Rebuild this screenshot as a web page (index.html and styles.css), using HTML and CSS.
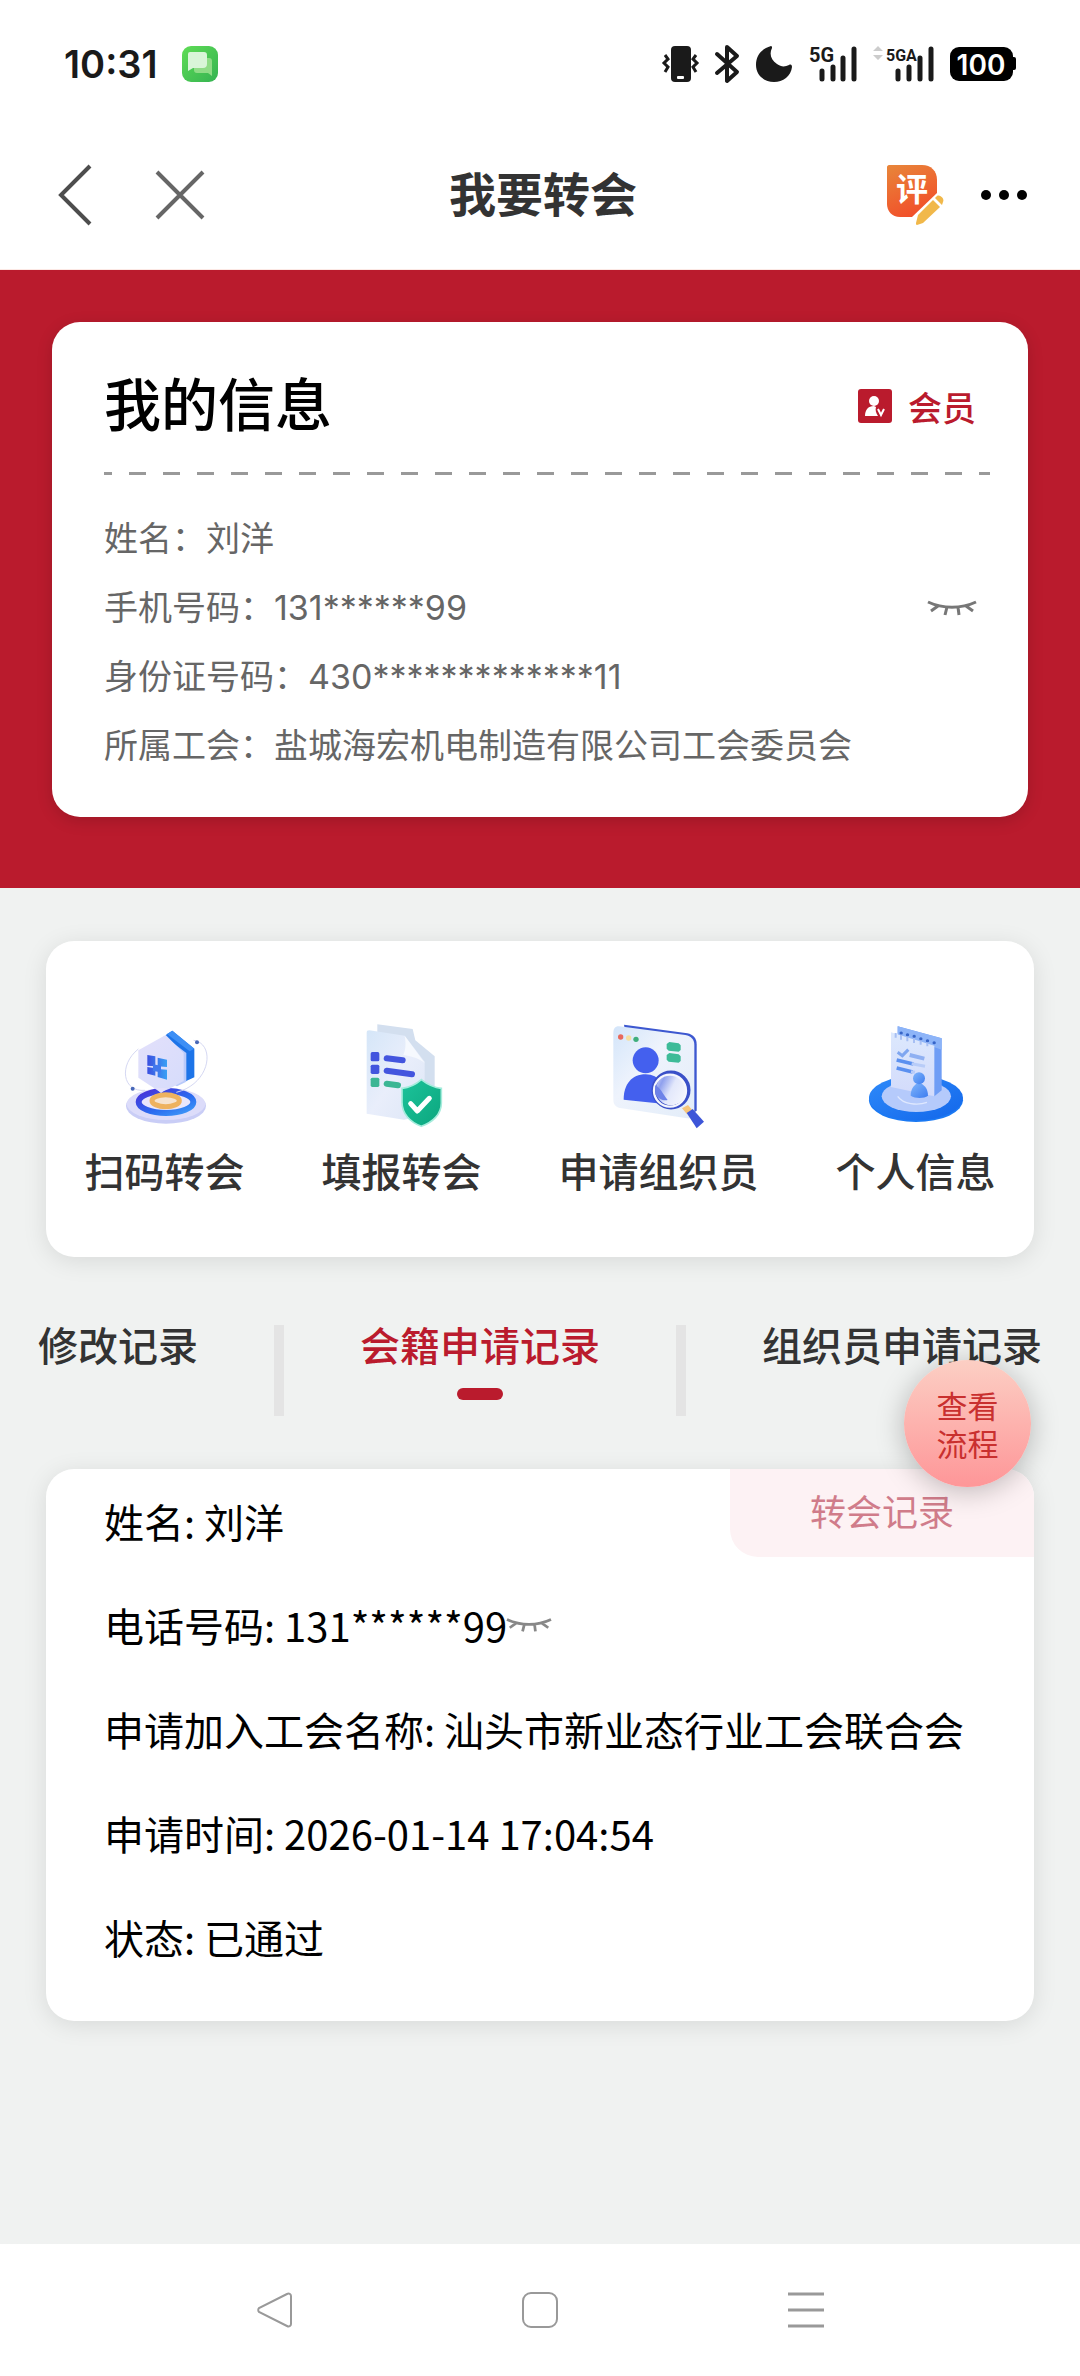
FILE: index.html
```html
<!DOCTYPE html>
<html lang="zh-CN">
<head>
  <meta charset="UTF-8">
  <meta name="viewport" content="width=device-width, initial-scale=1.0">
  <title>我要转会</title>
  <link rel="stylesheet" href="styles.css">
</head>
<body>

  <div class="status-bar">
    <div class="status-left">
      <span class="time">10:31</span>
      <svg class="msg-icon" width="36" height="36" viewBox="0 0 36 36">
        <defs>
          <linearGradient id="msgBg" x1="0" y1="0" x2="1" y2="1">
            <stop offset="0" stop-color="#5fdc55"/>
            <stop offset="1" stop-color="#35b352"/>
          </linearGradient>
        </defs>
        <rect width="36" height="36" rx="9" fill="url(#msgBg)"/>
        <path d="M14 12h13a3 3 0 0 1 3 3v15l-4-3H15a3 3 0 0 1-3-3v-9z" fill="#8fdc86"/>
        <path d="M8 6h14a3 3 0 0 1 3 3v9a4 4 0 0 1-4 4H11l-5 3V8a2 2 0 0 1 2-2z" fill="#d9f5d8"/>
      </svg>
    </div>
    <div class="status-right">
      <svg width="36" height="38" viewBox="0 0 36 38">
        <rect x="8" y="1" width="20" height="36" rx="4" fill="#1a1a1a"/>
        <rect x="14" y="31" width="7" height="3" rx="1" fill="#fff"/>
        <path d="M2 10l3 4-4 4 4 4-3 5M33 10l-3 4 4 4-4 4 3 5" fill="none" stroke="#1a1a1a" stroke-width="3"/>
      </svg>
      <svg width="24" height="38" viewBox="0 0 24 38">
        <path d="M2 9l20 18-10 9V2l10 9L2 28" fill="none" stroke="#1a1a1a" stroke-width="4" stroke-linejoin="round" stroke-linecap="round"/>
      </svg>
      <svg width="38" height="38" viewBox="0 0 38 38">
        <path d="M16 1C6 4 1 11 1 20c0 10 8 17 18 17 9 0 17-6 18-15 0-2-1-3-3-2-4 2-8 2-12-1-6-4-8-10-5-16 0-1 0-2-1-2z" fill="#1a1a1a"/>
      </svg>
      <svg width="48" height="38" viewBox="0 0 48 38">
        <text class="net" x="0" y="17">5G</text>
        <path d="M13 26v8M24 22v12M34 13v21M45 4v30" stroke="#1a1a1a" stroke-width="5" stroke-linecap="round"/>
      </svg>
      <svg width="61" height="38" viewBox="0 0 61 38">
        <path d="M0 6l5-5 5 5zM0 10l5 5 5-5z" fill="#ccc"/>
        <text class="net-narrow" x="13" y="16">5GA</text>
        <path d="M25 26v8M36 22v12M47 13v21M58 4v30" stroke="#1a1a1a" stroke-width="5" stroke-linecap="round"/>
      </svg>
      <svg width="66" height="34" viewBox="0 0 66 34">
        <rect width="63" height="34" rx="9" fill="#000"/>
        <rect x="60" y="10" width="6" height="13" rx="2" fill="#000"/>
        <text class="battery" x="31" y="28">100</text>
      </svg>
    </div>
  </div>

  <header class="header">
    <div class="header-left">
      <button class="icon-btn" aria-label="返回">
        <svg width="34" height="62" viewBox="0 0 34 62">
          <path d="M32 2L3 31l29 29" fill="none" stroke="#4d4d4d" stroke-width="4"/>
        </svg>
      </button>
      <button class="icon-btn" aria-label="关闭">
        <svg width="48" height="48" viewBox="0 0 48 48">
          <path d="M1 1l46 46M47 1L1 47" fill="none" stroke="#666" stroke-width="4"/>
        </svg>
      </button>
    </div>
    <h1 class="title">我要转会</h1>
    <div class="header-right">
      <button class="icon-btn" aria-label="评价">
        <svg width="58" height="62" viewBox="0 0 58 62">
          <defs>
            <linearGradient id="rateBg" x1="0" y1="0" x2="0.4" y2="1">
              <stop offset="0" stop-color="#e8863a"/>
              <stop offset="1" stop-color="#f1512a"/>
            </linearGradient>
          </defs>
          <path d="M3 1h33c9 0 15 6 15 15v13L26 53H14C6 53 1 47 1 40V3c0-1 1-2 2-2z" fill="url(#rateBg)"/>
          <text class="rate" x="26" y="37">评</text>
          <path d="M47 36l7 7-17 16-6 2c-1 0-1-1-1-2l2-8z" fill="#f1b84a"/>
          <path d="M49 34l2-2c3-2 8 3 6 6l-1 3z" fill="#f1b84a"/>
        </svg>
      </button>
      <button class="icon-btn" aria-label="更多">
        <svg width="48" height="12" viewBox="0 0 48 12">
          <circle cx="6" cy="6" r="5"/>
          <circle cx="24" cy="6" r="5"/>
          <circle cx="42" cy="6" r="5"/>
        </svg>
      </button>
    </div>
  </header>

  <section class="hero">
    <div class="info-card">
      <div class="info-head">
        <h2>我的信息</h2>
        <div class="member">
          <svg width="34" height="34" viewBox="0 0 34 34">
            <rect width="34" height="34" rx="3" fill="#ba1b2d"/>
            <circle cx="16" cy="12" r="5" fill="#fff"/>
            <path d="M7 27c0-6 3-10 9-10l2 1c-1 3 0 6 2 9z" fill="#fff"/>
            <path d="M20 20l3 6 3-6" fill="none" stroke="#fff" stroke-width="2"/>
          </svg>
          <span>会员</span>
        </div>
      </div>
      <div class="dash-line"></div>
      <div class="info-list">
        <p>姓名：刘洋</p>
        <p>
          手机号码：131******99
          <button class="icon-btn" aria-label="显示号码">
            <svg class="eye" width="48" height="16" viewBox="0 0 48 16">
              <path d="M0 2c15 7 33 7 48 0M10 6l-7 5M19 7l-2 8M30 7l1 8M38 6l7 5" fill="none" stroke="#777" stroke-width="3"/>
            </svg>
          </button>
        </p>
        <p>身份证号码：430*************11</p>
        <p>所属工会：盐城海宏机电制造有限公司工会委员会</p>
      </div>
    </div>
  </section>

  <main class="main">
    <nav class="services">
      <a class="service" href="#scan">
        <svg width="104" height="104" viewBox="98 98 312 312">
          <defs>
            <linearGradient id="ringBlue" x1="0" y1="0" x2="1" y2="1">
              <stop offset="0" stop-color="#4a2fd8"/>
              <stop offset="0.6" stop-color="#2a6cf0"/>
              <stop offset="1" stop-color="#3f9bf8"/>
            </linearGradient>
            <linearGradient id="hexFace" x1="0" y1="0" x2="1" y2="1">
              <stop offset="0" stop-color="#e3e0fb"/>
              <stop offset="1" stop-color="#d6dcfb"/>
            </linearGradient>
            <linearGradient id="winBlue" x1="0" y1="0" x2="1" y2="0">
              <stop offset="0" stop-color="#3b4fe0"/>
              <stop offset="1" stop-color="#3aa0f5"/>
            </linearGradient>
          </defs>
          <ellipse cx="257" cy="347" rx="120" ry="53" fill="#c9cdf6"/>
          <ellipse cx="257" cy="341" rx="118" ry="48" fill="#dcdcfa"/>
          <ellipse cx="257" cy="335" rx="82" ry="33" fill="#e9e6fc" stroke="url(#ringBlue)" stroke-width="18"/>
          <ellipse cx="256" cy="331" rx="41" ry="18" fill="#f6e3cf" stroke="#eeb25f" stroke-width="15"/>
          <path d="M174 176c-60 48-48 130 20 124M340 150c66 10 52 130-52 156" fill="none" stroke="#d5d8f3" stroke-width="3"/>
          <path d="M256 134l20-13 66 54v86l-26 12-60-14z" fill="#1d74e8"/>
          <path d="M276 121l66 54-14 8-68-52z" fill="#3d8ff5"/>
          <path d="M250 136l68 52v86l-28 14-40-20z" fill="#b9cafa"/>
          <path d="M174 180l82-46 54 54v84l-44 24-26 10-66-44z" fill="url(#hexFace)"/>
          <path d="M201 194l24 4v30l-24-2zM232 202l28 6v22l-28-2zM201 230l24 4v22l-24-6zM232 236l28 2v30l-28-8z" fill="url(#winBlue)"/>
          <path d="M218 222l24 4v20l-24-4z" fill="#4279ed"/>
          <path d="M226 292l36 2-20 14z" fill="#e3e0fb"/>
          <circle cx="350" cy="156" r="6" fill="#4767b8"/>
          <circle cx="157" cy="295" r="6" fill="#4767b8"/>
        </svg>
        <span>扫码转会</span>
      </a>
      <a class="service" href="#fill">
        <svg width="104" height="104" viewBox="808 98 312 312">
          <defs>
            <linearGradient id="docFace" x1="0" y1="0" x2="1" y2="1">
              <stop offset="0" stop-color="#d5e6f8"/>
              <stop offset="0.5" stop-color="#e9eefb"/>
              <stop offset="1" stop-color="#dde6f6"/>
            </linearGradient>
            <linearGradient id="shield" x1="0" y1="0" x2="1" y2="1">
              <stop offset="0" stop-color="#1cc39a"/>
              <stop offset="1" stop-color="#0ca67e"/>
            </linearGradient>
          </defs>
          <path d="M890 102l106 14 8 34 58 48v90l-40 20-132-50z" fill="#d3dfef"/>
          <path d="M866 120l106 16 60 78v160l-62 14-112-18V128c0-6 2-8 8-8z" fill="url(#docFace)"/>
          <path d="M972 136l60 82c-18-14-36-20-64-24 8-18 8-38 4-58z" fill="#f6f9fe"/>
          <rect x="870" y="185" width="26" height="28" rx="5" fill="#4355de"/>
          <rect x="870" y="223" width="26" height="28" rx="5" fill="#4355de"/>
          <rect x="870" y="262" width="26" height="28" rx="5" fill="#3bb694"/>
          <path d="M918 204l48 6M918 241l76 11" stroke="#4355de" stroke-width="18" stroke-linecap="round"/>
          <path d="M918 280l34 5" stroke="#3bb694" stroke-width="18" stroke-linecap="round"/>
          <path d="M1022 268c18 14 38 24 60 26v44c0 34-26 58-60 70-34-12-58-38-58-72v-42c22-2 42-12 58-26z" fill="url(#shield)" stroke="#a5ecdc" stroke-width="5"/>
          <path d="M990 340l20 22 36-38" fill="none" stroke="#fff" stroke-width="15" stroke-linecap="round" stroke-linejoin="round"/>
        </svg>
        <span>填报转会</span>
      </a>
      <a class="service" href="#organizer">
        <svg width="104" height="104" viewBox="199 98 312 312">
          <defs>
            <linearGradient id="winFace" x1="0" y1="0" x2="1" y2="1">
              <stop offset="0" stop-color="#d3e5fa"/>
              <stop offset="0.4" stop-color="#eef3fc"/>
              <stop offset="1" stop-color="#e3edf9"/>
            </linearGradient>
            <linearGradient id="lens" x1="0" y1="0" x2="1" y2="0.5">
              <stop offset="0" stop-color="#f3f5fd"/>
              <stop offset="0.3" stop-color="#8fa0ee"/>
              <stop offset="0.6" stop-color="#e3e8fb"/>
              <stop offset="1" stop-color="#f3f5fd"/>
            </linearGradient>
          </defs>
          <path d="M250 103l190 26c18 4 28 16 28 32v200l-24 16-190-250z" fill="#3d58d0"/>
          <path d="M236 108l198 26c18 3 27 14 27 30v202c0 14-8 20-22 18l-196-30c-16-3-25-10-25-26V128c0-14 6-21 18-20z" fill="url(#winFace)"/>
          <circle cx="240" cy="140" r="8" fill="#e8695c"/>
          <circle cx="264" cy="143" r="8" fill="#f5dfa0"/>
          <circle cx="286" cy="147" r="8" fill="#3fae7c"/>
          <path d="M386 155l28 4 6 6v14l-6 5-30-3-6-6v-14zM386 188l28 4 6 6v14l-6 5-30-3-6-6v-14z" fill="#3dbb98"/>
          <circle cx="315" cy="210" r="39" fill="#4460ee"/>
          <path d="M249 328c0-46 24-76 66-76 40 0 64 34 64 90z" fill="#4460ee"/>
          <circle cx="391" cy="299" r="52" fill="url(#lens)" stroke="#3a50c8" stroke-width="13"/>
          <circle cx="388" cy="301" r="48" fill="none" stroke="#f5f6fd" stroke-width="7"/>
          <path d="M343 285c14 4 22 24 38 44-12 4-28-4-36-16z" fill="#6d82e8"/>
          <path d="M424 354l18-10 12 14-16 12z" fill="#f6c57c"/>
          <path d="M438 368l18-12 34 38-22 20z" fill="#3d55d8"/>
        </svg>
        <span>申请组织员</span>
      </a>
      <a class="service" href="#profile">
        <svg width="104" height="104" viewBox="971 98 312 312">
          <defs>
            <linearGradient id="disc" x1="0" y1="0" x2="1" y2="1">
              <stop offset="0" stop-color="#2f8bfa"/>
              <stop offset="1" stop-color="#1266ea"/>
            </linearGradient>
            <linearGradient id="padFace" x1="0" y1="0" x2="0" y2="1">
              <stop offset="0" stop-color="#dce8fd"/>
              <stop offset="1" stop-color="#d3dbfb"/>
            </linearGradient>
            <linearGradient id="pawn" x1="0" y1="0" x2="1" y2="1">
              <stop offset="0" stop-color="#7eb4fb"/>
              <stop offset="1" stop-color="#3d7df0"/>
            </linearGradient>
          </defs>
          <ellipse cx="1127" cy="330" rx="141" ry="65" fill="#1a79f3"/>
          <ellipse cx="1127" cy="323" rx="141" ry="67" fill="url(#disc)"/>
          <ellipse cx="1128" cy="318" rx="104" ry="47" fill="#b5cafb"/>
          <path d="M1072 318c16 24 60 28 88 18" fill="none" stroke="#dfe8fe" stroke-width="4"/>
          <path d="M1072 108l132 36v156l-22 18-110-60z" fill="#6f9df5"/>
          <path d="M1072 108l132 36v34l-132-46z" fill="#8db4f8"/>
          <path d="M1052 126l130 40v152l-130-28z" fill="url(#padFace)"/>
          <path d="M1066 128v14M1082 132v16M1101 137v16M1121 142v16M1141 147v16M1161 152v16" stroke="#a7bff3" stroke-width="6"/>
          <path d="M1082 128h1M1101 133h1M1121 138h1M1141 145h1M1161 151h1M1181 157h1" stroke="#3765c8" stroke-width="9" stroke-linecap="round"/>
          <path d="M1072 186l14 10 18-18" fill="none" stroke="#7fa6f0" stroke-width="9"/>
          <path d="M1108 194l44 11" stroke="#8fb0f2" stroke-width="12"/>
          <path d="M1069 209l50 12M1069 233l48 12" stroke="#5b90f0" stroke-width="11"/>
          <path d="M1114 220l40 8M1112 244l12 2" stroke="#b8ccf8" stroke-width="9"/>
          <path d="M1111 316c0-18 8-30 18-36h14c12 6 20 18 20 36-12 9-38 9-52 0z" fill="url(#pawn)"/>
          <circle cx="1136" cy="264" r="18" fill="url(#pawn)"/>
        </svg>
        <span>个人信息</span>
      </a>
    </nav>

    <div class="tabs">
      <button class="tab">修改记录</button>
      <span class="tab-sep"></span>
      <button class="tab active">会籍申请记录</button>
      <span class="tab-sep"></span>
      <button class="tab">组织员申请记录</button>
    </div>

    <section class="record">
      <div class="record-tag">转会记录</div>
      <p>姓名: 刘洋</p>
      <p>电话号码: 131******99<button class="icon-btn" aria-label="显示号码"><svg class="eye" width="44" height="16" viewBox="0 0 48 16"><path d="M0 2c15 7 33 7 48 0M10 6l-7 5M19 7l-2 8M30 7l1 8M38 6l7 5" fill="none" stroke="#888" stroke-width="3"/></svg></button></p>
      <p>申请加入工会名称: 汕头市新业态行业工会联合会</p>
      <p>申请时间: 2026-01-14 17:04:54</p>
      <p>状态: 已通过</p>
      <button class="flow-btn">查看<br>流程</button>
    </section>
  </main>

  <div class="nav-bar">
    <button class="icon-btn" aria-label="后退">
      <svg width="36" height="36" viewBox="0 0 36 36">
        <path d="M31 2L3 16c-1 1-1 3 0 4l28 14c2 1 4 0 4-2V4c0-2-2-3-4-2z" fill="none" stroke="#999" stroke-width="2"/>
      </svg>
    </button>
    <button class="icon-btn" aria-label="主页">
      <svg width="36" height="36" viewBox="0 0 36 36">
        <rect x="1" y="1" width="34" height="34" rx="8" fill="none" stroke="#999" stroke-width="2"/>
      </svg>
    </button>
    <button class="icon-btn" aria-label="菜单">
      <svg width="36" height="36" viewBox="0 0 36 36">
        <path d="M0 2h36M0 18h36M0 34h36" stroke="#999" stroke-width="3"/>
      </svg>
    </button>
  </div>

</body>
</html>
```

FILE: styles.css
```css
* {
  box-sizing: border-box;
}

body {
  font-family: Inter, "Noto Sans CJK SC", sans-serif;
  background-color: #f0f2f1;
  color: #000;
  display: flex;
  flex-direction: column;
  min-height: 100vh;
  margin: 0;
}

h1, h2, p {
  margin: 0;
}

button {
  font-family: inherit;
  padding: 0;
  border: none;
  background: none;
  cursor: pointer;
}

svg {
  display: block;
  overflow: visible;
}

.icon-btn {
  display: flex;
}

/* status bar */
.status-bar {
  display: flex;
  justify-content: space-between;
  align-items: center;
  height: 124px;
  padding: 4px 64px 0;
  background-color: #fff;
}

.status-left {
  display: flex;
  align-items: center;
  gap: 24px;
}

.status-right {
  display: flex;
  align-items: center;
  gap: 16px;
}

.time {
  font-size: 38px;
  font-weight: 600;
  color: #1a1a1a;
}

.net,
.net-narrow {
  font-family: Roboto, sans-serif;
  font-size: 20px;
  font-weight: 700;
  fill: #1a1a1a;
}

.net-narrow {
  font-size: 16px;
}

.battery {
  font-size: 28px;
  font-weight: 600;
  fill: #fff;
  text-anchor: middle;
}

/* header */
.header {
  display: grid;
  grid-template-columns: 1fr auto 1fr;
  align-items: center;
  height: 146px;
  padding: 0 52px 3px 58px;
  background-color: #fff;
  border-bottom: 1px solid #fce8e4;
}

.header-left,
.header-right {
  display: flex;
  align-items: center;
}

.header-left {
  gap: 64px;
}

.header-right {
  justify-content: flex-end;
  gap: 36px;
}

.title {
  font-size: 47px;
  line-height: 64px;
  font-weight: 700;
  color: #333;
}

.rate {
  font-size: 32px;
  font-weight: 700;
  fill: #fff;
  text-anchor: middle;
}

/* my info */
.hero {
  padding: 52px 52px 71px;
  background-color: #ba1b2d;
}

.info-card {
  padding: 44px 38px 37px 52px;
  border-radius: 28px;
  background-color: #fff;
  box-shadow: 0 4px 16px rgba(0, 0, 0, 0.15);
}

.info-head {
  display: flex;
  justify-content: space-between;
  align-items: center;
  padding: 0 14px 26px 0;
}

.info-head h2 {
  font-size: 57px;
  line-height: 80px;
  font-weight: 500;
}

.member {
  display: flex;
  align-items: center;
  gap: 16px;
  font-size: 34px;
  font-weight: 500;
  color: #ba1b2d;
}

.dash-line {
  height: 3px;
  background: repeating-linear-gradient(90deg, #999 0 8px, transparent 8px 25px, #999 25px 34px);
}

.info-list {
  margin-top: 29px;
  font-size: 34px;
  line-height: 69px;
  color: #666;
}

.info-list p {
  display: flex;
  justify-content: space-between;
  align-items: center;
  padding-right: 14px;
}

/* services */
.main {
  flex: 1;
  padding: 53px 0;
}

.services {
  display: flex;
  justify-content: space-around;
  margin: 0 46px;
  padding: 82px 0 56px;
  border-radius: 28px;
  background-color: #fff;
  box-shadow: 0 4px 24px rgba(0, 0, 0, 0.1);
}

.service {
  display: flex;
  flex-direction: column;
  align-items: center;
  gap: 18px;
  font-size: 40px;
  line-height: 56px;
  font-weight: 500;
  color: #333;
  text-decoration: none;
}

/* tabs */
.tabs {
  display: flex;
  justify-content: space-around;
  height: 91px;
  margin-top: 68px;
}

.tab {
  display: flex;
  flex-direction: column;
  align-items: center;
  font-size: 40px;
  line-height: 44px;
  font-weight: 500;
  color: #333;
  white-space: nowrap;
}

.tab.active {
  color: #ba1b2d;
}

.tab.active::after {
  content: "";
  width: 46px;
  height: 12px;
  margin-top: 19px;
  border-radius: 6px;
  background-color: #ba1b2d;
}

.tab-sep {
  width: 10px;
  background-color: #e4e4e4;
}

/* record */
.record {
  position: relative;
  margin: 53px 46px 0;
  padding: 0 58px 32px;
  border-radius: 28px;
  background-color: #fff;
  box-shadow: 0 4px 24px rgba(0, 0, 0, 0.1);
  font-size: 40px;
  line-height: 104px;
}

.record p {
  display: flex;
  align-items: center;
  font-family: "Noto Sans CJK SC", sans-serif;
}

.record-tag {
  position: absolute;
  top: 0;
  right: 0;
  width: 304px;
  border-radius: 0 28px 0 28px;
  background-color: #fdf2f4;
  color: #d07c8a;
  font-size: 36px;
  line-height: 88px;
  text-align: center;
}

.flow-btn {
  position: absolute;
  top: -109px;
  right: 3px;
  width: 127px;
  height: 127px;
  padding-top: 4px;
  border-radius: 50%;
  background: linear-gradient(#fccfc4, #fe9698);
  box-shadow: 0 4px 28px rgba(0, 0, 0, 0.25);
  color: #c9302f;
  font-size: 31px;
  line-height: 38px;
}

/* system navigation */
.nav-bar {
  display: grid;
  grid-template-columns: repeat(3, 1fr);
  justify-items: center;
  align-items: center;
  height: 132px;
  padding: 0 13%;
  background-color: #fff;
}
```
